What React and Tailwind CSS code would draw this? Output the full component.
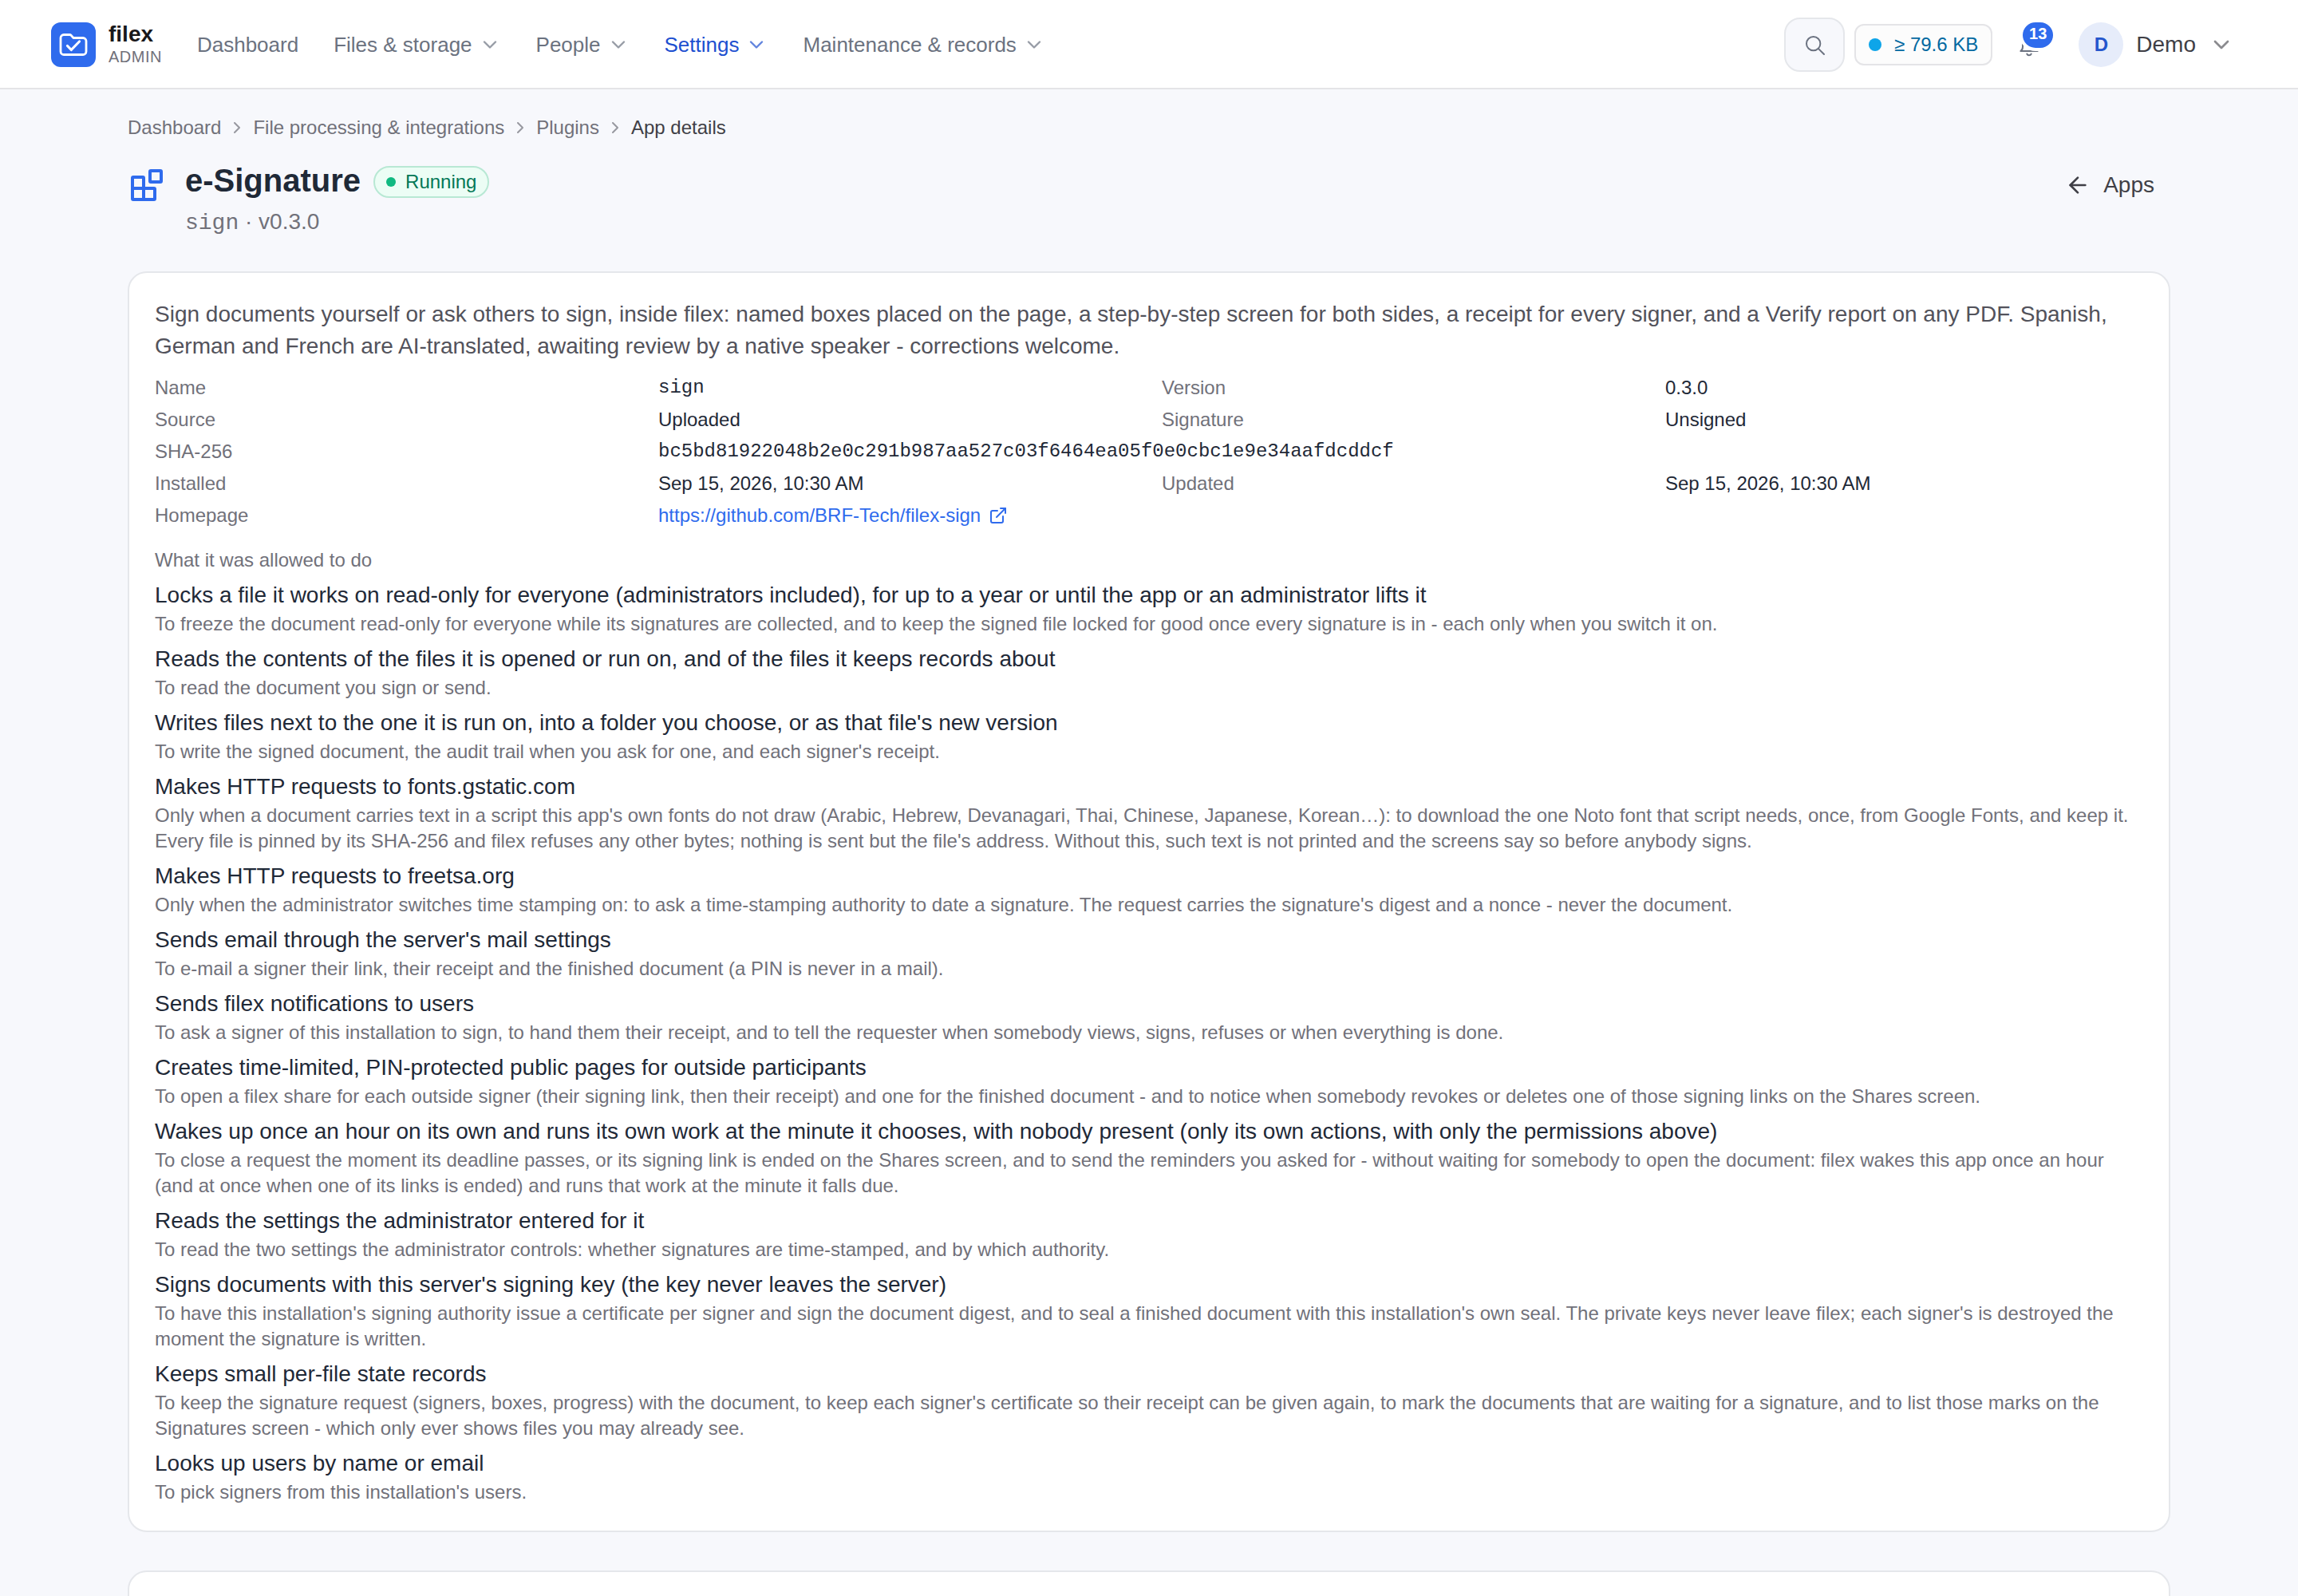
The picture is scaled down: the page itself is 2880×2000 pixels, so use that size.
import { ArrowLeft, ChevronDown, ChevronRight, ExternalLink } from "lucide-react";

const NAV = [
  { label: "Dashboard" },
  { label: "Files & storage", menu: true },
  { label: "People", menu: true },
  { label: "Settings", menu: true, active: true },
  { label: "Maintenance & records", menu: true },
];

const CRUMBS = ["Dashboard", "File processing & integrations", "Plugins"];

const PERMISSIONS = [
  {
    title: "Locks a file it works on read-only for everyone (administrators included), for up to a year or until the app or an administrator lifts it",
    reason: "To freeze the document read-only for everyone while its signatures are collected, and to keep the signed file locked for good once every signature is in - each only when you switch it on.",
  },
  {
    title: "Reads the contents of the files it is opened or run on, and of the files it keeps records about",
    reason: "To read the document you sign or send.",
  },
  {
    title: "Writes files next to the one it is run on, into a folder you choose, or as that file's new version",
    reason: "To write the signed document, the audit trail when you ask for one, and each signer's receipt.",
  },
  {
    title: "Makes HTTP requests to fonts.gstatic.com",
    reason: "Only when a document carries text in a script this app's own fonts do not draw (Arabic, Hebrew, Devanagari, Thai, Chinese, Japanese, Korean…): to download the one Noto font that script needs, once, from Google Fonts, and keep it. Every file is pinned by its SHA-256 and filex refuses any other bytes; nothing is sent but the file's address. Without this, such text is not printed and the screens say so before anybody signs.",
  },
  {
    title: "Makes HTTP requests to freetsa.org",
    reason: "Only when the administrator switches time stamping on: to ask a time-stamping authority to date a signature. The request carries the signature's digest and a nonce - never the document.",
  },
  {
    title: "Sends email through the server's mail settings",
    reason: "To e-mail a signer their link, their receipt and the finished document (a PIN is never in a mail).",
  },
  {
    title: "Sends filex notifications to users",
    reason: "To ask a signer of this installation to sign, to hand them their receipt, and to tell the requester when somebody views, signs, refuses or when everything is done.",
  },
  {
    title: "Creates time-limited, PIN-protected public pages for outside participants",
    reason: "To open a filex share for each outside signer (their signing link, then their receipt) and one for the finished document - and to notice when somebody revokes or deletes one of those signing links on the Shares screen.",
  },
  {
    title: "Wakes up once an hour on its own and runs its own work at the minute it chooses, with nobody present (only its own actions, with only the permissions above)",
    reason: "To close a request the moment its deadline passes, or its signing link is ended on the Shares screen, and to send the reminders you asked for - without waiting for somebody to open the document: filex wakes this app once an hour (and at once when one of its links is ended) and runs that work at the minute it falls due.",
  },
  {
    title: "Reads the settings the administrator entered for it",
    reason: "To read the two settings the administrator controls: whether signatures are time-stamped, and by which authority.",
  },
  {
    title: "Signs documents with this server's signing key (the key never leaves the server)",
    reason: "To have this installation's signing authority issue a certificate per signer and sign the document digest, and to seal a finished document with this installation's own seal. The private keys never leave filex; each signer's is destroyed the moment the signature is written.",
  },
  {
    title: "Keeps small per-file state records",
    reason: "To keep the signature request (signers, boxes, progress) with the document, to keep each signer's certificate so their receipt can be given again, to mark the documents that are waiting for a signature, and to list those marks on the Signatures screen - which only ever shows files you may already see.",
  },
  {
    title: "Looks up users by name or email",
    reason: "To pick signers from this installation's users.",
  },
];

const SearchIcon = () => (
  <svg viewBox="0 0 24 24" className="size-8" fill="none" stroke="currentColor" strokeWidth="1.5" strokeLinecap="round">
    <circle cx="11" cy="11" r="6.5" />
    <path d="m16 16 5 5" />
  </svg>
);

const BellIcon = () => (
  <svg viewBox="0 0 24 24" className="size-8" fill="none" stroke="currentColor" strokeWidth="1.5" strokeLinecap="round" strokeLinejoin="round">
    <path d="M20 18H4c1.300-.8 2-2 2-4v-4a6 6 0 0 1 12 0v4c0 2 .7 3.200 2 4Z" />
    <path d="M10 20.700a2.200 2.200 0 0 0 4 0" />
  </svg>
);

const BlocksIcon = () => (
  <svg viewBox="0 0 24 24" className="mt-2 size-12 text-[#2f6bed]" fill="none" stroke="currentColor" strokeWidth="2" strokeLinecap="round" strokeLinejoin="round">
    <rect x="14" y="3" width="7" height="7" rx="0.5" />
    <path d="M10 21V7.500a.5.5 0 0 0-.5-.5h-6a.5.5 0 0 0-.5.5v13a.5.5 0 0 0 .5.5h13a.5.5 0 0 0 .5-.5v-6a.5.5 0 0 0-.5-.5H3" />
  </svg>
);

const Logo = () => (
  <a href="#" className="flex items-center gap-4">
    <svg viewBox="0 0 56 56" className="size-14 rounded-xl bg-[#2f6bed]" fill="none" stroke="#fff" strokeWidth="2.8" strokeLinecap="round" strokeLinejoin="round">
      <path d="M12 19.500a4 4 0 0 1 4-4h7.200a3 3 0 0 1 2 .8l2.800 3.200h12a4 4 0 0 1 4 4v13a4 4 0 0 1-4 4H16a4 4 0 0 1-4-4z" />
      <path d="m20.500 29.500 4.800 5L35.500 24" strokeWidth="3.2" />
    </svg>
    <span className="flex flex-col">
      <span className="text-[28px] leading-[30px] font-bold text-[#18181b]">filex</span>
      <span className="text-[20px] leading-[26px] tracking-wide text-[#71717a]">ADMIN</span>
    </span>
  </a>
);

const Header = () => (
  <header className="flex h-28 items-center justify-between border-b-2 border-[#e4e4e7] bg-white px-16 pt-0.5">
    <div className="flex items-center gap-11">
      <Logo />
      <nav className="flex items-center gap-11 text-[26px] leading-9">
        {NAV.map((item) =>
          item.menu ? (
            <button
              key={item.label}
              className={item.active ? "flex items-center gap-2 text-[#1d4fd0]" : "flex items-center gap-2 text-[#6b7280]"}
            >
              {item.label}
              <ChevronDown className="size-7 opacity-70" />
            </button>
          ) : (
            <a key={item.label} href="#" className="text-[#6b7280]">
              {item.label}
            </a>
          )
        )}
      </nav>
    </div>

    <div className="flex items-center gap-3">
      <button aria-label="Search" className="flex h-[68px] w-[76px] items-center justify-center rounded-[20px] border-2 border-[#e5e7eb] bg-[#f7f8fc] text-[#6b7280]">
        <SearchIcon />
      </button>
      <button className="flex h-[52px] items-center gap-4 rounded-xl border-2 border-[#e4e4e7] bg-[#fcfcfc] px-4 text-[24px] text-[#0369a1]">
        <span className="size-4 rounded-full bg-[#0ea5e9]" />
        ≥ 79.6 KB
      </button>
      <button aria-label="Notifications" className="relative mx-1.5 flex size-14 items-center justify-center text-[#6b7280]">
        <BellIcon />
        <span className="absolute top-0 -right-0.5 h-8 rounded-full bg-[#2f6bed] px-2 text-[20px] leading-7 font-bold text-white ring-4 ring-white">13</span>
      </button>
      <button className="flex items-center gap-4 px-4 text-[28px] text-[#3f3f46]">
        <span className="flex size-14 items-center justify-center rounded-full bg-[#e6ecfa] text-[24px] font-bold text-[#2456cc]">D</span>
        Demo
        <ChevronDown className="size-8 opacity-60" />
      </button>
    </div>
  </header>
);

const Term = ({ children }) => <dt className="text-[#71717a]">{children}</dt>;

const App = () => {
  return (
    <div className="min-h-screen bg-[#f7f8fc] font-['Liberation_Sans',Arial,sans-serif] text-[#1f2937]">
      <Header />

      <main className="mx-auto flex max-w-[2560px] flex-col pt-8">
        <nav aria-label="Breadcrumb" className="flex items-center gap-2 text-[24px] leading-8 text-[#71717a]">
          {CRUMBS.map((crumb) => (
            <span key={crumb} className="flex items-center gap-2">
              <a href="#">{crumb}</a>
              <ChevronRight className="size-6 opacity-70" />
            </span>
          ))}
          <span className="text-[#3f3f46]">App details</span>
        </nav>

        <div className="mt-6 mb-10 flex items-start justify-between">
          <div className="flex items-start gap-6">
            <BlocksIcon />
            <div>
              <div className="flex items-center gap-4">
                <h1 className="pb-1 text-[40px] leading-[52px] font-bold">e-Signature</h1>
                <span className="flex h-10 items-center gap-3 rounded-full border-2 border-[#b8e8d4] bg-[#ecfdf5] px-3.5 text-[24px] text-[#047857]">
                  <span className="size-3 rounded-full bg-[#10b981]" />
                  Running
                </span>
              </div>
              <p className="pt-0.5 text-[28px] leading-10 text-[#71717a]">
                <span className="font-['Liberation_Mono',monospace]">sign</span> · v0.3.0
              </p>
            </div>
          </div>
          <button className="flex h-16 items-center gap-4 px-5 text-[28px] text-[#3f3f46]">
            <ArrowLeft className="size-8" />
            Apps
          </button>
        </div>

        <section className="rounded-3xl border-2 border-[#e5e7eb] bg-white p-8">
          <p className="text-[28px] leading-10 text-[#52525b]">
            Sign documents yourself or ask others to sign, inside filex: named boxes placed on the page, a step-by-step screen for both sides, a receipt for every signer, and a Verify report on any PDF. Spanish, German and French are AI-translated, awaiting review by a native speaker - corrections welcome.
          </p>

          <dl className="mt-4 grid grid-cols-4 gap-x-8 gap-y-2 text-[24px] leading-8">
            <Term>Name</Term>
            <dd className="font-['Liberation_Mono',monospace]">sign</dd>
            <Term>Version</Term>
            <dd>0.3.0</dd>
            <Term>Source</Term>
            <dd>Uploaded</dd>
            <Term>Signature</Term>
            <dd>Unsigned</dd>
            <Term>SHA-256</Term>
            <dd className="col-span-3 font-['Liberation_Mono',monospace]">
              bc5bd81922048b2e0c291b987aa527c03f6464ea05f0e0cbc1e9e34aafdcddcf
            </dd>
            <Term>Installed</Term>
            <dd>Sep 15, 2026, 10:30 AM</dd>
            <Term>Updated</Term>
            <dd>Sep 15, 2026, 10:30 AM</dd>
            <Term>Homepage</Term>
            <dd className="col-span-3">
              <a href="https://github.com/BRF-Tech/filex-sign" className="inline-flex items-center gap-2.5 text-[#2f6bed]">
                https://github.com/BRF-Tech/filex-sign
                <ExternalLink className="size-6" />
              </a>
            </dd>
          </dl>

          <h2 className="mt-6 text-[24px] leading-8 text-[#71717a]">What it was allowed to do</h2>
          <ul className="mt-2 flex flex-col gap-2">
            {PERMISSIONS.map((permission) => (
              <li key={permission.title}>
                <p className="text-[28px] leading-10">{permission.title}</p>
                <p className="text-[24px] leading-8 text-[#71717a]">{permission.reason}</p>
              </li>
            ))}
          </ul>
        </section>

        <section className="mt-12 h-40 rounded-3xl border-2 border-[#e5e7eb] bg-white" />
      </main>
    </div>
  );
};

export default App;
